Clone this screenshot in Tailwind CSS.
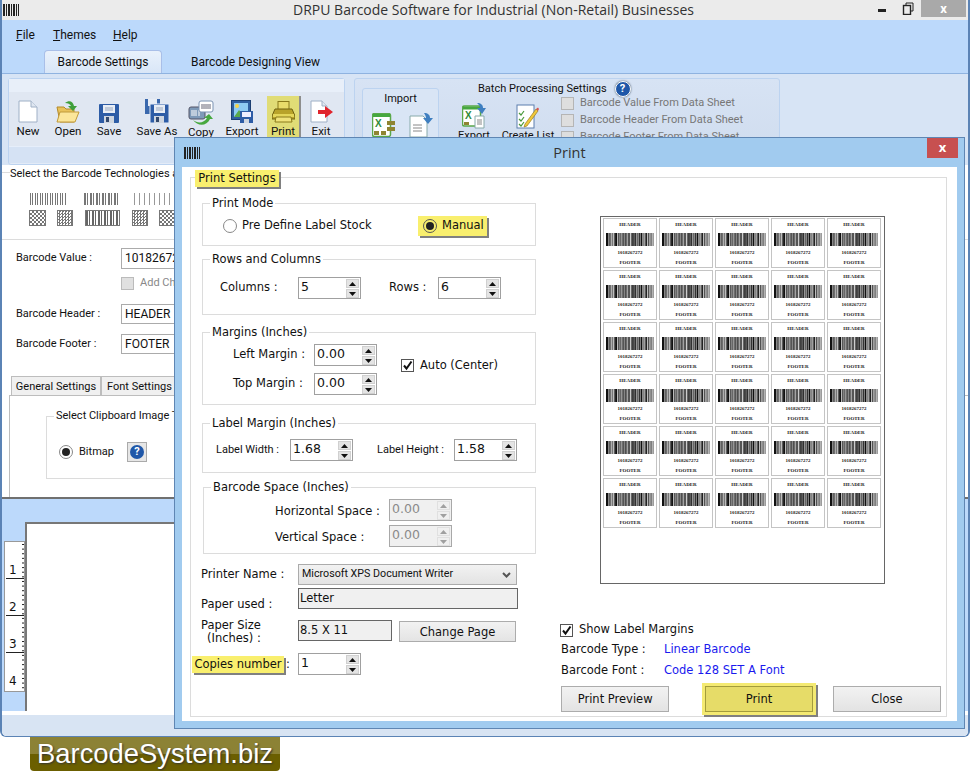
<!DOCTYPE html>
<html lang="en">
<head>
<meta charset="UTF-8">
<title>DRPU Barcode Software</title>
<script src="https://cdn.jsdelivr.net/npm/@tailwindcss/browser@4"></script>
</head>
<body class="bg-white">
<div class="relative w-[970px] h-[771px] overflow-hidden bg-white text-[#111] font-['Roboto'] text-[12px]">

  <!-- main window -->
  <div class="h-[737px] flex flex-col border-x-2 border-b border-[#5b83b5] rounded-b-[6px] overflow-hidden">
    <div class="h-[20px] flex bg-[#ebebeb] shrink-0">
      <svg class="w-[16px] h-[12px] mt-[4px] ml-[1px]" data-bars="1"></svg>
      <div class="flex-1 text-center font-['Open_Sans'] text-[14px] leading-[20px] text-[#333] pl-[88px]">DRPU Barcode Software for Industrial (Non-Retail) Businesses</div>
      <div class="w-[88px] flex items-start">
        <div class="w-[8px] h-[3px] bg-[#222] mt-[9px] ml-[-2px]"></div>
        <svg class="w-[12px] h-[13px] ml-[16px] mt-[2px]" viewBox="0 0 12 13" fill="none" stroke="#222"><rect x="1.5" y="3.5" width="7" height="9" stroke-width="1.4"/><path d="M4 3V1h7v8H9"/></svg>
        <div class="w-[45px] h-[17px] ml-[7px] bg-[#a9a9a9] text-white text-center text-[13px] leading-[17px] font-bold">x</div>
      </div>
    </div>

    <div class="h-[53px] bg-[#bcd9fb] shrink-0">
      <div class="h-[30px] flex items-center pl-[14px]">
        <span class="w-[37px]"><u>F</u>ile</span>
        <span class="w-[60px]"><u>T</u>hemes</span>
        <span><u>H</u>elp</span>
      </div>
      <div class="h-[23px] flex items-stretch pl-[42px]">
        <div class="w-[118px] bg-linear-to-b from-[#e9f1fb] to-[#d9e6f7] border border-b-0 border-[#a9bfe8] rounded-t-[4px] flex items-center justify-center">Barcode Settings</div>
        <div class="pl-[29px] flex items-center">Barcode Designing View</div>
      </div>
    </div>

    <!-- ribbon -->
    <div class="h-[92px] shrink-0 bg-[#d7e4f5] border-t border-[#8fb3e0] flex pl-[6px] pt-[4px] gap-[9px] overflow-hidden">
      <div class="w-[337px] h-[87px] border border-[#bcd3f0] rounded-[3px] bg-[#e3ebf7] flex flex-col text-[11.5px]">
        <div class="h-[13px] bg-[#e8eff9]"></div>
        <div class="h-[54px] bg-[#e0e7f2] flex items-start">
          <div class="w-[38px] flex flex-col items-center"><div class="h-[31px] flex items-end" data-icon="new"></div><span class="leading-[13px] mt-[2px]">New</span></div>
          <div class="w-[42px] flex flex-col items-center"><div class="h-[31px] flex items-end" data-icon="open"></div><span class="leading-[13px] mt-[2px]">Open</span></div>
          <div class="w-[40px] flex flex-col items-center"><div class="h-[31px] flex items-end" data-icon="save"></div><span class="leading-[13px] mt-[2px]">Save</span></div>
          <div class="w-[56px] flex flex-col items-center"><div class="h-[31px] flex items-end" data-icon="saveas"></div><span class="leading-[13px] mt-[2px]">Save As</span></div>
          <div class="w-[32px] flex flex-col items-center"><div class="h-[33px] flex items-end" data-icon="copy"></div><span class="leading-[13px] mt-[1px]">Copy</span></div>
          <div class="w-[50px] flex flex-col items-center"><div class="h-[31px] flex items-end" data-icon="export"></div><span class="leading-[13px] mt-[2px]">Export</span></div>
          <div class="w-[32px] h-[48px] mt-[4px] bg-[#e0dc76] shadow-[2px_0_0_#8e8e8e] flex flex-col items-center"><div class="h-[27px] flex items-end" data-icon="print"></div><span class="leading-[13px] mt-[2px]">Print</span></div>
          <div class="w-[44px] flex flex-col items-center"><div class="h-[31px] flex items-end" data-icon="exit"></div><span class="leading-[13px] mt-[2px]">Exit</span></div>
        </div>
        <div class="h-[17px] bg-[#d5e2f4] border-t border-[#e6eefa]"></div>
      </div>

      <div class="w-[426px] h-[87px] border border-[#bcd3f0] rounded-[3px] bg-linear-to-b from-[#d7e3f4] to-[#cfdcee] flex pl-[7px] pt-[9px] text-[11px]">
        <div class="w-[77px] h-[70px] border border-[#bcd3f0] rounded-[3px] bg-[#d9e5f5]">
          <div class="text-center leading-[20px]">Import</div>
          <div class="flex gap-[13px] pl-[9px] mt-[4px]">
            <div data-icon="excel"></div>
            <div data-icon="doc"></div>
          </div>
        </div>
        <div class="pl-[14px] -mt-[9px]">
          <div class="h-[18px] flex items-center pl-[25px] gap-[8px] mt-[1px]">
            <span>Batch Processing Settings</span>
            <span class="w-[16px] h-[16px] rounded-full bg-[#1f57a8] border border-white text-white text-[11px] font-bold text-center leading-[14px] shadow-[0_0_2px_#456]">?</span>
          </div>
          <div class="flex">
            <div class="w-[42px] flex flex-col items-center mt-[5px]"><div data-icon="export2"></div><span class="leading-[13px]">Export</span></div>
            <div class="w-[66px] flex flex-col items-center mt-[5px]"><div data-icon="list"></div><span class="leading-[13px]">Create List</span></div>
            <div class="flex flex-col text-[#777] -mt-[3px]">
              <label class="h-[17px] flex items-center gap-[6px]"><span class="w-[13px] h-[13px] bg-[#dedede] border border-[#b5b5b5]"></span>Barcode Value From Data Sheet</label>
              <label class="h-[17px] flex items-center gap-[6px]"><span class="w-[13px] h-[13px] bg-[#dedede] border border-[#b5b5b5]"></span>Barcode Header From Data Sheet</label>
              <label class="h-[17px] flex items-center gap-[6px]"><span class="w-[13px] h-[13px] bg-[#dedede] border border-[#b5b5b5]"></span>Barcode Footer From Data Sheet</label>
            </div>
          </div>
        </div>
      </div>
    </div>

    <!-- left settings panel, mostly hidden behind the dialog -->
    <div class="h-[334px] shrink-0 bg-white border-b-2 border-[#707070] overflow-hidden text-[11px]">
      <div class="h-[75px] border-b border-[#dcdcdc] relative">
        <span class="absolute left-0 top-[7px] w-[8px] h-px bg-[#dcdcdc]"></span>
        <div class="pl-[8px] pt-[1px] leading-[16px] whitespace-nowrap">Select the Barcode Technologies and Type</div>
        <div class="flex pl-[28px] mt-[11px] h-[12px]">
          <div class="w-[36px] bg-[repeating-linear-gradient(90deg,#777_0_1px,transparent_1px_2px,#777_2px_3px,transparent_3px_5px)]"></div>
          <div class="w-[34px] ml-[18px] bg-[repeating-linear-gradient(90deg,#777_0_2px,transparent_2px_3px,#777_3px_4px,transparent_4px_6px)]"></div>
          <div class="w-[41px] ml-[16px] bg-[repeating-linear-gradient(90deg,#999_0_1px,transparent_1px_5px)]"></div>
        </div>
        <div class="flex pl-[27px] mt-[5px]">
          <div class="w-[17px] h-[16px] border border-[#777] bg-[repeating-conic-gradient(#777_0_25%,#fff_0_50%)] bg-[length:4px_4px]"></div>
          <div class="w-[16px] h-[16px] ml-[11px] border border-[#777] bg-[repeating-conic-gradient(#777_0_25%,#fff_0_50%)] bg-[length:3px_3px]"></div>
          <div class="w-[35px] h-[16px] ml-[12px] border border-[#777] bg-[repeating-linear-gradient(90deg,#666_0_2px,#fff_2px_3px,#666_3px_4px,#fff_4px_6px)]"></div>
          <div class="w-[16px] h-[16px] ml-[12px] border border-[#777] bg-[repeating-conic-gradient(#777_0_25%,#fff_0_50%)] bg-[length:3px_3px]"></div>
          <div class="w-[16px] h-[16px] ml-[11px] border border-[#777] bg-[repeating-conic-gradient(#777_0_25%,#fff_0_50%)] bg-[length:4px_4px]"></div>
        </div>
      </div>
      <div class="flex items-center h-[21px] mt-[8px] pl-[14px]"><span class="w-[105px]">Barcode Value :</span><div class="w-[100px] h-[21px] border border-[#ababab] pl-[3px] leading-[19px] text-[12px]">1018267272</div></div>
      <div class="flex items-center h-[13px] mt-[8px] pl-[119px] gap-[6px] text-[#888]"><span class="w-[13px] h-[13px] bg-[#e0e0e0] border border-[#bbb]"></span>Add Check Sum</div>
      <div class="flex items-center h-[20px] mt-[14px] pl-[14px]"><span class="w-[105px]">Barcode Header :</span><div class="w-[100px] h-[20px] border border-[#ababab] pl-[3px] leading-[18px] text-[12px]">HEADER</div></div>
      <div class="flex items-center h-[20px] mt-[10px] pl-[14px]"><span class="w-[105px]">Barcode Footer :</span><div class="w-[100px] h-[20px] border border-[#ababab] pl-[3px] leading-[18px] text-[12px]">FOOTER</div></div>
      <div class="flex pl-[9px] mt-[22px] h-[19px] whitespace-nowrap">
        <div class="w-[90px] bg-[#f0f0f0] border border-b-0 border-[#bdbdbd] text-center leading-[19px]">General Settings</div>
        <div class="w-[90px] bg-[#f0f0f0] border border-b-0 border-[#bdbdbd] pl-[5px] leading-[19px]">Font Settings</div>
      </div>
      <div class="ml-[7px] h-[105px] border-t border-l border-[#bdbdbd] pl-[36px] pt-[20px]">
        <div class="relative h-[63px] w-[200px] border border-[#dcdcdc]">
          <span class="absolute -top-[8px] left-[7px] bg-white px-[2px] leading-[14px] whitespace-nowrap">Select Clipboard Image Type</span>
          <div class="flex items-center pl-[12px] pt-[25px] gap-[6px]">
            <span class="w-[14px] h-[14px] rounded-full border border-[#888] flex items-center justify-center"><span class="w-[8px] h-[8px] rounded-full bg-[#222]"></span></span>
            <span>Bitmap</span>
            <span class="w-[20px] h-[20px] ml-[7px] bg-[#e6e6e6] border border-[#aaa] flex items-center justify-center"><span class="w-[14px] h-[14px] rounded-full bg-[#1f57a8] text-white text-[11px] font-bold text-center leading-[14px]">?</span></span>
          </div>
        </div>
      </div>
    </div>

    <!-- designing canvas -->
    <div class="h-[212px] shrink-0 bg-[#bcd9fb] flex pl-[2px]">
      <svg class="w-[21px] h-[151px] mt-[42px] bg-white border border-[#999]" viewBox="0 0 19 149" data-ruler="1"></svg>
      <div class="mt-[23px] w-[300px] h-[189px] bg-white border-t-2 border-l-2 border-[#777]"></div>
    </div>
    <div class="h-[4px] shrink-0 bg-white"></div>
    <div class="flex-1 bg-[#d8e4f3]"></div>
  </div>

  <!-- logo strip -->
  <div class="ml-[30px] w-[250px] h-[34px] rounded-b-[4px] bg-linear-to-b from-[#8c8235] from-50% to-[#6b5f00] to-50% text-white font-['Liberation_Sans'] text-[27.4px] leading-[33px] text-center [text-shadow:1px_1px_2px_#333]">BarcodeSystem.biz</div>

  <!-- print dialog -->
  <div class="absolute left-[174px] top-[137px] w-[791px] h-[592px] bg-[#a1cbef] border border-[#5f86b3] font-['DejaVu_Sans'] text-[11.5px]">
    <div class="relative h-[29px] flex items-center justify-center font-['Open_Sans'] text-[14.5px] text-[#333]">
      <svg class="absolute left-[9px] top-[9px] w-[16px] h-[12px]" data-bars="1"></svg>
      Print
      <div class="absolute right-[6px] top-0 w-[31px] h-[20px] bg-[#c75050] text-white text-center font-bold text-[13px] leading-[18px]">x</div>
    </div>
    <div class="mx-[7px] w-[775px] h-[554px] bg-white pt-[10px] pl-[8px]">
      <div class="relative w-[757px] h-[540px] border border-[#dcdcdc] flex">
        <span class="absolute -top-[8px] left-[4px] h-[17px] w-[84px] bg-[#f9ef6e] shadow-[2px_2px_0_#808080] text-center leading-[17px]">Print Settings</span>

        <!-- left column -->
        <div class="w-[345px] pl-[11px] pt-[25px] shrink-0">
          <div class="relative h-[43px] border border-[#dcdcdc]">
            <span class="absolute -top-[8px] left-[7px] bg-white px-[2px] leading-[14px]">Print Mode</span>
            <div class="flex items-center h-full pl-[20px] pt-[3px]">
              <span class="w-[14px] h-[14px] rounded-full border border-[#888]"></span>
              <span class="ml-[5px] w-[176px]">Pre Define Label Stock</span>
              <div class="w-[69px] h-[20px] bg-[#f9ef6e] shadow-[2px_2px_0_#808080] flex items-center pl-[5px] gap-[5px]">
                <span class="w-[14px] h-[14px] rounded-full border border-[#555] flex items-center justify-center"><span class="w-[8px] h-[8px] rounded-full bg-[#222]"></span></span>Manual
              </div>
            </div>
          </div>

          <div class="relative h-[56px] mt-[13px] border border-[#dcdcdc]">
            <span class="absolute -top-[8px] left-[7px] bg-white px-[2px] leading-[14px]">Rows and Columns</span>
            <div class="flex items-center pt-[17px] pl-[17px]">
              <span class="w-[78px]">Columns :</span>
              <div data-spin="5"></div>
              <span class="ml-[28px] w-[49px]">Rows :</span>
              <div data-spin="6"></div>
            </div>
          </div>

          <div class="relative h-[73px] mt-[17px] border border-[#dcdcdc]">
            <span class="absolute -top-[8px] left-[7px] bg-white px-[2px] leading-[14px]">Margins (Inches)</span>
            <div class="flex">
              <div class="pl-[30px] pt-[11px]">
                <div class="flex items-center"><span class="w-[81px]">Left Margin :</span><div data-spin="0.00"></div></div>
                <div class="flex items-center mt-[7px]"><span class="w-[81px]">Top Margin :</span><div data-spin="0.00"></div></div>
              </div>
              <div class="flex items-center gap-[6px] pl-[24px] pt-[3px]">
                <span class="w-[13px] h-[13px] border border-[#555]" data-check="1"></span>Auto (Center)
              </div>
            </div>
          </div>

          <div class="relative h-[50px] mt-[18px] border border-[#dcdcdc] font-['Roboto'] text-[11px]">
            <span class="absolute -top-[8px] left-[7px] bg-white px-[2px] leading-[14px] font-['DejaVu_Sans'] text-[11.5px]">Label Margin (Inches)</span>
            <div class="flex items-center pl-[13px] pt-[15px]">
              <span class="w-[74px]">Label Width :</span>
              <div data-spin="1.68"></div>
              <span class="ml-[24px] w-[77px]">Label Height :</span>
              <div data-spin="1.58"></div>
            </div>
          </div>

          <div class="relative h-[67px] mt-[14px] ml-px border border-[#dcdcdc]">
            <span class="absolute -top-[8px] left-[7px] bg-white px-[2px] leading-[14px]">Barcode Space (Inches)</span>
            <div class="pl-[71px] pt-[11px]">
              <div class="flex items-center"><span class="w-[114px] pt-[3px]">Horizontal Space :</span><div data-spin="0.00" data-off="1"></div></div>
              <div class="flex items-center mt-[4px]"><span class="w-[114px] pt-[3px]">Vertical Space :</span><div data-spin="0.00" data-off="1"></div></div>
            </div>
          </div>

          <div class="flex items-center mt-[10px] -ml-px">
            <span class="w-[97px]">Printer Name :</span>
            <div class="w-[219px] h-[21px] bg-linear-to-b from-[#f2f2f2] to-[#e3e3e3] border border-[#ababab] flex items-center justify-between pl-[3px] pr-[5px] font-['Roboto'] text-[10.7px]">
              Microsoft XPS Document Writer
              <svg class="w-[9px] h-[6px]" viewBox="0 0 9 6" fill="none" stroke="#555" stroke-width="2"><path d="M1 1l3.500 3.500L8 1"/></svg>
            </div>
          </div>
          <div class="flex mt-[3px] -ml-px">
            <span class="w-[97px] pt-[8px]">Paper used :</span>
            <div class="w-[220px] h-[21px] bg-[#f0f0f0] border border-[#666] pl-[1px] leading-[18px]">Letter</div>
          </div>
          <div class="flex mt-[7px] -ml-px">
            <span class="w-[97px] leading-[13px] -mt-[1px]">Paper Size<br><span class="pl-[6px]">(Inches) :</span></span>
            <div class="w-[94px] h-[21px] bg-[#f0f0f0] border border-[#666] pl-[1px] leading-[19px]">8.5 X 11</div>
            <div class="w-[117px] h-[21px] ml-[7px] mt-[1px] bg-linear-to-b from-[#f2f2f2] to-[#e4e4e4] border border-[#acacac] text-center leading-[20px]">Change Page</div>
          </div>
          <div class="flex items-center mt-[8px] -ml-[10px]">
            <span class="w-[92px] h-[17px] bg-[#f9ef6e] shadow-[2px_2px_0_#808080] text-center leading-[17px]">Copies number</span>
            <span class="ml-[2px] w-[12px]">:</span>
            <div data-spin="1"></div>
          </div>
        </div>

        <!-- right column -->
        <div class="pl-[24px] pt-[38px] w-[405px] shrink-0">
          <div class="ml-[40px] w-[285px] h-[368px] border border-[#666] pl-[2px] pt-[1px] grid grid-cols-[repeat(5,54px)] grid-rows-[repeat(6,50px)] gap-x-[2px] gap-y-[2px]" id="sheet"></div>
          <label class="flex items-center gap-[6px] mt-[39px] h-[14px]">
            <span class="w-[13px] h-[13px] border border-[#555]" data-check="1"></span>Show Label Margins
          </label>
          <div class="flex mt-[5px] h-[16px] items-center pl-px"><span class="w-[103px]">Barcode Type :</span><span class="text-[#1a1aee]">Linear Barcode</span></div>
          <div class="flex mt-[5px] h-[16px] items-center pl-px"><span class="w-[103px]">Barcode Font :</span><span class="text-[#1a1aee]">Code 128 SET A Font</span></div>
          <div class="flex items-center mt-[4px] h-[32px] pl-px">
            <div class="w-[109px] h-[26px] bg-linear-to-b from-[#f2f2f2] to-[#e3e3e3] border border-[#acacac] text-center leading-[24px]">Print Preview</div>
            <div class="w-[114px] h-[32px] ml-[33px] p-[3px] bg-[#f4ea72] shadow-[2px_2px_0_#808080]">
              <div class="h-full bg-[#e6dc68] border border-[#a39c3c] text-center leading-[24px]">Print</div>
            </div>
            <div class="w-[109px] h-[26px] ml-[17px] bg-linear-to-b from-[#f2f2f2] to-[#e3e3e3] border border-[#acacac] text-center leading-[24px]">Close</div>
          </div>
        </div>
      </div>
    </div>
  </div>
</div>

<script>
  // small toolbar icons
  const icons = {
    new: `<svg width="20" height="23" viewBox="0 0 20 23"><path d="M1 1h12l6 6v15H1z" fill="#fff" stroke="#9fb0c6"/><path d="M13 1v6h6" fill="#dfe6f0" stroke="#9fb0c6"/></svg>`,
    open: `<svg width="24" height="24" viewBox="0 0 24 24"><path d="M1 8h7l2 2h8v13H4z" fill="#e8c25a" stroke="#b58a2a"/><path d="M4 13h19l-4 10H1z" fill="#fbe69a" stroke="#c09a3a"/><path d="M9 4c4-3 8-2 9 3h3l-4 5-5-5h3c-1-2-3-3-6-3z" fill="#3f9f3a"/></svg>`,
    save: `<svg width="20" height="19" viewBox="0 0 20 19"><rect width="20" height="19" rx="1" fill="#2d5ca6"/><rect x="4" y="1" width="12" height="8" fill="#e8edf5"/><path d="M6 4h8M6 6h8" stroke="#9aa8bd"/><rect x="5" y="12" width="10" height="7" fill="#cfd6e0"/><rect x="7" y="13" width="3" height="5" fill="#33496e"/></svg>`,
    saveas: `<svg width="24" height="24" viewBox="0 0 24 24"><rect width="15" height="15" fill="#3a68ad"/><rect x="3" y="0" width="9" height="7" fill="#e8edf5"/><rect x="5" y="5" width="19" height="19" fill="#2d5ca6" stroke="#e3ebf7"/><rect x="9" y="6" width="11" height="8" fill="#e8edf5"/><path d="M11 9h7M11 11h7" stroke="#9aa8bd"/><rect x="9" y="17" width="10" height="7" fill="#cfd6e0"/><rect x="11" y="18" width="3" height="5" fill="#33496e"/></svg>`,
    copy: `<svg width="26" height="25" viewBox="0 0 26 25"><rect x="1" y="7" width="16" height="12" rx="2" fill="#7e9ab8" stroke="#556"/><path d="M4 10v6M6 10v6M8 10v6M11 10v6" stroke="#fff"/><rect x="11" y="1" width="14" height="11" rx="2" fill="#fff" stroke="#7b93b3"/><path d="M14 4v5M16 4v5M18 4v5M20 4v5M22 4v5" stroke="#667"/><path d="M5 20c5 4 11 3 14-2h-3l5-4 4 5h-3c-3 7-12 8-17 1z" fill="#46a83f"/></svg>`,
    export: `<svg width="22" height="23" viewBox="0 0 22 23"><rect x="0.500" y="0.500" width="19" height="19" fill="#2f5f9f" stroke="#1c3f72"/><rect x="3" y="3" width="14" height="14" fill="#8ecbf2"/><path d="M3 17l5-7 4 5 2-2 3 4z" fill="#5aa84a"/><circle cx="6" cy="6" r="2" fill="#f6d44a"/><rect x="9" y="11" width="13" height="12" fill="#2d5ca6"/><rect x="11" y="12" width="9" height="5" fill="#eef"/><rect x="13" y="19" width="5" height="4" fill="#cfd6e0"/></svg>`,
    print: `<svg width="23" height="22" viewBox="0 0 23 22"><rect x="6" y="0.500" width="11" height="9" fill="#e9dc6a" stroke="#8a7a1a"/><path d="M3 8h17l3 7v3H0v-3z" fill="#b8a32a" stroke="#6e6010"/><rect x="1" y="13" width="21" height="3" fill="#e4d65a"/><path d="M4 16h15l1 5H3z" fill="#efe27a" stroke="#8a7a1a"/></svg>`,
    exit: `<svg width="23" height="23" viewBox="0 0 23 23"><path d="M1 1h11l5 5v16H1z" fill="#fff" stroke="#9fb0c6"/><path d="M12 1v5h5" fill="#dfe6f0" stroke="#9fb0c6"/><path d="M8 10h7V6l8 6-8 6v-4H8z" fill="#e0242c"/></svg>`,
    excel: `<svg width="24" height="24" viewBox="0 0 24 24"><rect x="0.500" y="0.500" width="18" height="23" rx="2" fill="#fff" stroke="#5aa84a" stroke-width="1.500"/><rect x="1" y="1" width="17" height="3" fill="#46a83f"/><text x="3" y="14" font-size="10" font-weight="700" fill="#2f8a3a" font-family="Liberation Sans">X</text><path d="M15 8h8v4h-8zM15 14h8v4h-8zM2 18h5v4H2zM9 18h5v4H9z" fill="#8f8432"/></svg>`,
    doc: `<svg width="24" height="24" viewBox="0 0 24 24"><path d="M1 3h13l4 4v17H1z" fill="#fff" stroke="#8aa"/><path d="M4 12h9M4 15h9M4 18h9" stroke="#888"/><path d="M15 0c4 0 6 2 6 5h3l-5 6-5-6h3c0-2-1-3-2-5z" fill="#3f7fc0"/></svg>`,
    export2: `<svg width="24" height="26" viewBox="0 0 24 26"><rect x="0.500" y="3" width="18" height="20" rx="2" fill="#fff" stroke="#5aa84a" stroke-width="1.500"/><rect x="1" y="3.500" width="17" height="3" fill="#46a83f"/><text x="3" y="16" font-size="10" font-weight="700" fill="#2f8a3a" font-family="Liberation Sans">X</text><path d="M2 19h5v3H2z" fill="#8f8432"/><path d="M13 13h9v12H13z" fill="#fff" stroke="#8aa"/><path d="M15 17h5M15 19h5M15 21h5" stroke="#888"/><path d="M15 0c4 0 6 2 6 5h3l-4 6-5-6h3c0-2-1-3-3-5z" fill="#3f7fc0"/></svg>`,
    list: `<svg width="24" height="26" viewBox="0 0 24 26"><rect x="1" y="2" width="17" height="23" fill="#fff" stroke="#5c7fae"/><path d="M3 10l2 2 3-4M3 16l2 2 3-4M3 21l2 2 3-4" fill="none" stroke="#4a9a3a" stroke-width="1.200"/><path d="M9 21l-1 3 3-1 11-15-2-2z" fill="#f0c83c" stroke="#8a6d10" stroke-width=".6"/><path d="M20 6l2 2 1-2-1-1.500z" fill="#d9534f"/></svg>`,
  };
  document.querySelectorAll('[data-icon]').forEach(el => { el.innerHTML = icons[el.dataset.icon]; });

  // spin boxes
  const arrow = (d, c) => `<svg width="7" height="4" viewBox="0 0 7 4"><path d="${d}" fill="${c}"/></svg>`;
  document.querySelectorAll('[data-spin]').forEach(el => {
    const off = el.dataset.off;
    const c = off ? '#a0a0a0' : '#111';
    const box = off
      ? 'flex w-[63px] h-[22px] border border-[#a8a8a8] bg-[#f0f0f0] text-[#8a8a8a]'
      : 'flex w-[63px] h-[22px] border border-[#a0a0a0] bg-white';
    const btn = off
      ? 'w-[13px] h-[9px] bg-[#f0f0f0] border border-[#e0e0e0] flex items-center justify-center'
      : 'w-[13px] h-[9px] bg-[#e4e4e4] border border-[#d0d0d0] flex items-center justify-center';
    el.innerHTML = `<div class="${box}">
      <span class="flex-1 pl-[2px] text-[12.5px] leading-[18px] font-['DejaVu_Sans']">${el.dataset.spin}</span>
      <div class="flex flex-col gap-px pt-[1px] pr-[1px]">
        <span class="${btn}">${arrow('M3.500 0L7 4H0z', c)}</span>
        <span class="${btn}">${arrow('M0 0h7L3.500 4z', c)}</span>
      </div>
    </div>`;
  });

  // check marks
  document.querySelectorAll('[data-check]').forEach(el => {
    el.innerHTML = `<svg class="w-[11px] h-[11px]" viewBox="0 0 11 11"><path d="M2 5.500l2.500 3L9.500 1.500" fill="none" stroke="#111" stroke-width="2"/></svg>`;
  });

  // pseudo random source so the bars stay the same on every run
  let seed = 7;
  const rnd = () => { seed = (seed * 25173 + 13849) % 65536; return seed / 65536; };

  // titlebar barcode icon
  document.querySelectorAll('[data-bars]').forEach(el => {
    el.setAttribute('viewBox', '0 0 16 12');
    let s = '', x = 0;
    [2,1,1,1,2,1,1,1,2,1,1,2].forEach((w, i) => { if (i % 2 == 0) s += `<rect x="${x}" width="${w}" height="12" fill="#222"/>`; x += w; });
    el.innerHTML = s + `<rect x="13" width="1" height="12" fill="#222"/><rect x="15" width="1" height="12" fill="#222"/>`;
  });

  // ruler
  const ruler = document.querySelector('[data-ruler]');
  let r = '';
  for (let i = 0; i < 33; i++) {
    const y = i * 4.62 + 2;
    r += `<rect x="17" y="${y}" width="2" height="1" fill="#222"/>`;
  }
  [[1, 32, 36], [2, 69, 73], [3, 106, 110], [4, 143, 0]].forEach(([n, y, l]) => {
    r += `<text x="4" y="${y}" font-size="12" fill="#111" font-family="DejaVu Sans">${n}</text>`;
    if (l) r += `<rect x="1" y="${l}" width="18" height="1" fill="#222"/>`;
  });
  ruler.innerHTML = r;

  // label sheet preview
  let bars = '', bx = 0;
  const grays = ['#111', '#333', '#555', '#222', '#777'];
  while (bx < 48) {
    const w = 0.7 + rnd() * 1.6;
    bars += `<rect x="${bx}" width="${w}" height="13" fill="${grays[Math.floor(rnd() * 5)]}"/>`;
    bx += w + 0.3 + rnd() * 0.5;
  }
  let kod = '';
  for (let i = 0; i < 30; i++) {
    kod += `<div class="border border-[#c4c4c4] flex flex-col items-center font-['Liberation_Serif'] font-bold text-[5px] text-[#222] pt-[3px]">
      <span class="leading-[6px]">HEADER</span>
      <svg class="w-[48px] h-[13px] mt-[5px]" viewBox="0 0 48 13">${bars}</svg>
      <span class="leading-[6px] mt-[4px]">1018267272</span>
      <span class="leading-[6px] mt-[4px]">FOOTER</span>
    </div>`;
  }
  document.getElementById('sheet').innerHTML = kod;
</script>
</body>
</html>
